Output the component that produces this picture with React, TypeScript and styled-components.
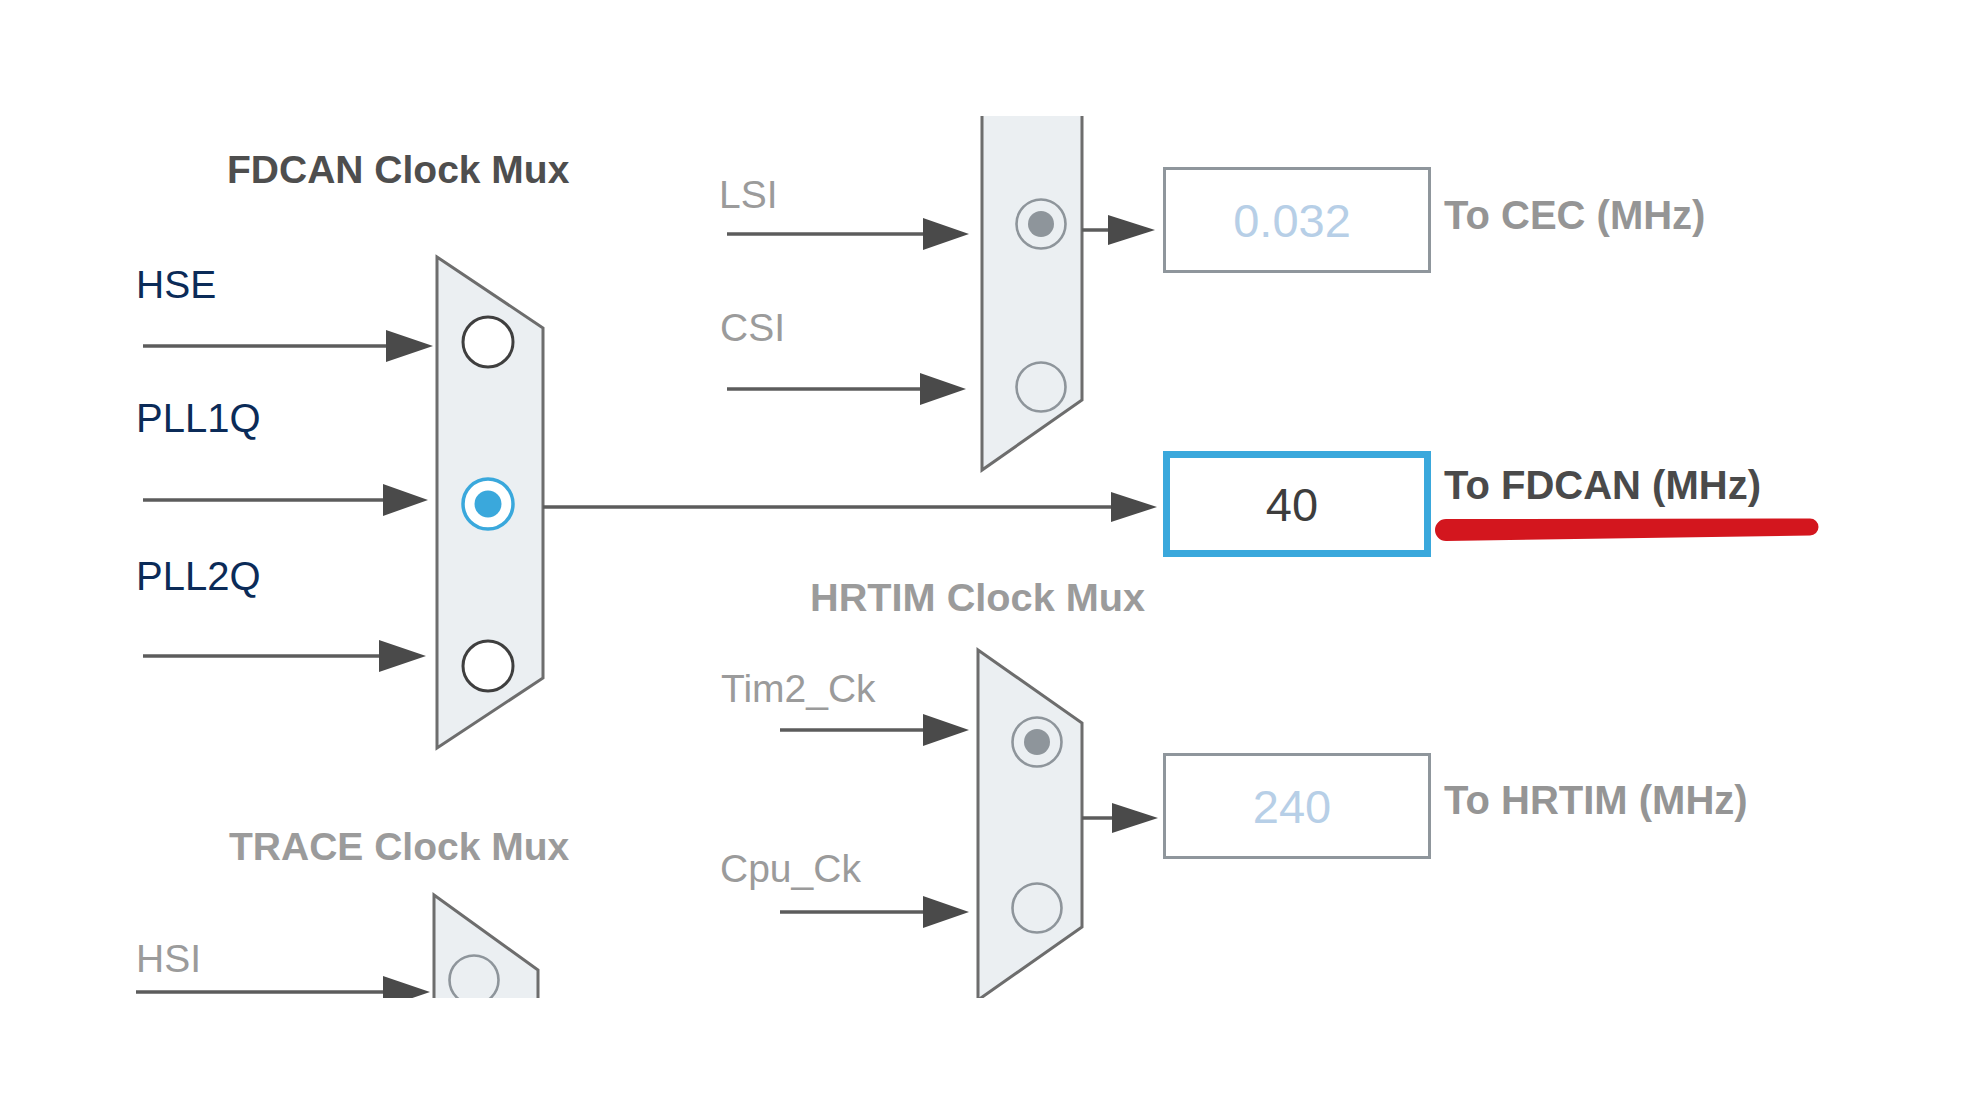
import React from "react";
import styled, { createGlobalStyle } from "styled-components";

const GlobalStyle = createGlobalStyle`
  html, body {
    margin: 0;
    padding: 0;
    background: #ffffff;
  }
  body {
    font-family: "Liberation Sans", Arial, sans-serif;
  }
`;

const Canvas = styled.div`
  position: relative;
  width: 1987px;
  height: 1116px;
  background: #ffffff;
  overflow: hidden;
`;

const Wiring = styled.svg`
  position: absolute;
  left: 0;
  top: 0;
  display: block;
`;

type Tone = "navy" | "gray" | "dark" | "mid";
const toneColor: Record<Tone, string> = {
  navy: "#0b2b58",
  gray: "#9b9b9b",
  dark: "#4e4e4e",
  mid: "#959595",
};

const Label = styled.span<{ $x: number; $base: number; $tone: Tone; $bold?: boolean; $size?: number }>`
  position: absolute;
  left: ${(p) => p.$x}px;
  top: ${(p) => Math.round(p.$base - 0.8465 * (p.$size ?? 39))}px;
  font-family: "Liberation Sans", Arial, sans-serif;
  font-size: ${(p) => p.$size ?? 39}px;
  font-weight: ${(p) => (p.$bold ? 700 : 400)};
  line-height: 1;
  white-space: nowrap;
  color: ${(p) => toneColor[p.$tone]};
`;

/* An output node of the clock tree: frequency box followed by its caption */
const OutputNode = styled.div<{ $y: number }>`
  position: absolute;
  left: 1163px;
  top: ${(p) => p.$y}px;
  display: flex;
  align-items: center;
  gap: 13px;
`;

const FreqBox = styled.div<{ $active?: boolean }>`
  width: 268px;
  height: 106px;
  box-sizing: border-box;
  border: ${(p) => (p.$active ? "7px solid #3aa8dc" : "3px solid #8f969c")};
  background: #ffffff;
  display: flex;
  align-items: center;
  justify-content: center;
  padding-right: 10px;
  font-family: "Liberation Sans", Arial, sans-serif;
  font-size: 47px;
  line-height: 1;
  color: ${(p) => (p.$active ? "#3d3d3d" : "#b7cfe7")};
`;

const Caption = styled.span<{ $active?: boolean; $lift: number }>`
  margin-bottom: ${(p) => p.$lift * 2}px;
  font-family: "Liberation Sans", Arial, sans-serif;
  font-size: 40px;
  font-weight: 700;
  line-height: 1;
  white-space: nowrap;
  color: ${(p) => (p.$active ? "#4a4a4a" : "#959595")};
`;

const MUX_STROKE = "#6d6d6d";
const MUX_FILL = "#ebeff2";
const WIRE = "#5c5c5c";
const HEAD = "#4a4a4a";
const BLUE = "#3aa8dc";
const GRAY_RADIO = "#8e959b";

const Mux = ({ points }: { points: string }) => (
  <polygon points={points} fill={MUX_FILL} stroke={MUX_STROKE} strokeWidth={3} strokeLinejoin="miter" />
);

type RadioKind = "off" | "on" | "dimOn" | "dimOff";
const Radio = ({ cx, cy, kind }: { cx: number; cy: number; kind: RadioKind }) => {
  if (kind === "on") {
    return (
      <g>
        <circle cx={cx} cy={cy} r={25} fill="#ffffff" stroke={BLUE} strokeWidth={3.5} />
        <circle cx={cx} cy={cy} r={13.5} fill={BLUE} />
      </g>
    );
  }
  if (kind === "off") {
    return <circle cx={cx} cy={cy} r={25} fill="#ffffff" stroke="#3f3f3f" strokeWidth={3} />;
  }
  return (
    <g>
      <circle cx={cx} cy={cy} r={24.5} fill="none" stroke={GRAY_RADIO} strokeWidth={2.6} />
      {kind === "dimOn" && <circle cx={cx} cy={cy} r={13} fill={GRAY_RADIO} />}
    </g>
  );
};

const Arrow = ({ x1, base, tip, y, half = 16 }: { x1: number; base: number; tip: number; y: number; half?: number }) => (
  <g>
    <line x1={x1} y1={y} x2={base + 4} y2={y} stroke={WIRE} strokeWidth={3.5} />
    <polygon points={`${base},${y - half} ${tip},${y} ${base},${y + half}`} fill={HEAD} />
  </g>
);

const Diagram = () => (
  <Wiring width={1987} height={1116} viewBox="0 0 1987 1116">
    <defs>
      <clipPath id="crop">
        <rect x={0} y={116} width={1987} height={882} />
      </clipPath>
    </defs>
    <g clipPath="url(#crop)">
      {/* FDCAN clock mux */}
      <Arrow x1={143} base={386} tip={433} y={346} />
      <Arrow x1={143} base={383} tip={428} y={500} />
      <Arrow x1={143} base={379} tip={426} y={656} />
      <Mux points="437,257 543,328 543,678 437,748" />
      <Radio cx={488} cy={342} kind="off" />
      <Radio cx={488} cy={504} kind="on" />
      <Radio cx={488} cy={666} kind="off" />
      <Arrow x1={543} base={1111} tip={1157} y={507} half={15} />

      {/* CEC mux */}
      <Arrow x1={727} base={923} tip={969} y={234} />
      <Arrow x1={727} base={920} tip={966} y={389} />
      <Mux points="982,40 1082,40 1082,400 982,470" />
      <Radio cx={1041} cy={224} kind="dimOn" />
      <Radio cx={1041} cy={387} kind="dimOff" />
      <Arrow x1={1082} base={1108} tip={1155} y={230} half={15} />

      {/* HRTIM mux */}
      <Arrow x1={780} base={923} tip={969} y={730} />
      <Arrow x1={780} base={923} tip={969} y={912} />
      <Mux points="978,650 1082,723 1082,927 978,1000 978,1040" />
      <Radio cx={1037} cy={742} kind="dimOn" />
      <Radio cx={1037} cy={908} kind="dimOff" />
      <Arrow x1={1082} base={1112} tip={1158} y={818} half={15} />

      {/* TRACE mux */}
      <Arrow x1={136} base={383} tip={430} y={992} />
      <Mux points="434,895 538,970 538,1060 434,1060" />
      <Radio cx={474} cy={980} kind="dimOff" />
    </g>
    {/* hand-drawn red underline */}
    <path
      d="M1446,519 L1810,518.5 A8.5,8.5 0 0 1 1810,535.5 L1446,541 A11,11 0 0 1 1446,519 Z"
      fill="#d3161e"
    />
  </Wiring>
);

export default function App() {
  return (
    <>
      <GlobalStyle />
      <Canvas>
        <Diagram />

        <Label $x={227} $base={183} $tone="dark" $bold>FDCAN Clock Mux</Label>
        <Label $x={136} $base={298} $tone="navy">HSE</Label>
        <Label $x={136} $base={432} $tone="navy" $size={40}>PLL1Q</Label>
        <Label $x={136} $base={590} $tone="navy" $size={40}>PLL2Q</Label>

        <Label $x={229} $base={860} $tone="gray" $bold>TRACE Clock Mux</Label>
        <Label $x={136} $base={972} $tone="gray">HSI</Label>

        <Label $x={719} $base={208} $tone="gray">LSI</Label>
        <Label $x={720} $base={341} $tone="gray">CSI</Label>

        <Label $x={810} $base={612} $tone="gray" $bold $size={39.7}>HRTIM Clock Mux</Label>
        <Label $x={721} $base={702} $tone="gray">Tim2_Ck</Label>
        <Label $x={720} $base={882} $tone="gray">Cpu_Ck</Label>

        <OutputNode $y={167}>
          <FreqBox>0.032</FreqBox>
          <Caption $lift={5}>To CEC (MHz)</Caption>
        </OutputNode>
        <OutputNode $y={451}>
          <FreqBox $active>40</FreqBox>
          <Caption $active $lift={19}>To FDCAN (MHz)</Caption>
        </OutputNode>
        <OutputNode $y={753}>
          <FreqBox>240</FreqBox>
          <Caption $lift={6}>To HRTIM (MHz)</Caption>
        </OutputNode>
      </Canvas>
    </>
  );
}
